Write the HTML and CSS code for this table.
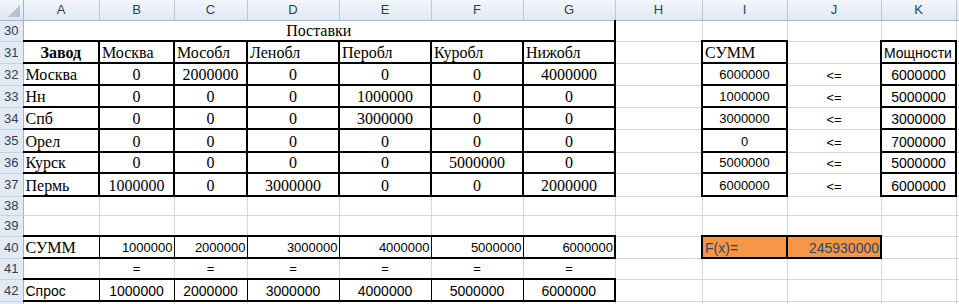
FILE: index.html
```html
<!DOCTYPE html>
<html lang="ru">
<head>
<meta charset="utf-8">
<title>Поставки</title>
<link rel="stylesheet" href="styles.css">
</head>
<body>
<table class="sheet">
  <colgroup>
    <col class="w-rh"><col class="w-a"><col class="w-b"><col class="w-c"><col class="w-d"><col class="w-e"><col class="w-f"><col class="w-g"><col class="w-h"><col class="w-i"><col class="w-j"><col class="w-k"><col class="w-l">
  </colgroup>
  <tr class="r-head">
    <th class="corner"><span class="tri"></span></th>
    <th class="ch">A</th><th class="ch">B</th><th class="ch">C</th><th class="ch">D</th><th class="ch">E</th><th class="ch">F</th><th class="ch">G</th><th class="ch">H</th><th class="ch">I</th><th class="ch">J</th><th class="ch">K</th><th class="ch"></th>
  </tr>
  <tr class="r21">
    <th class="rh">30</th>
    <td colspan="7" class="serif center title">Поставки</td>
    <td></td><td></td><td></td><td></td><td></td>
  </tr>
  <tr class="r22">
    <th class="rh">31</th>
    <td class="serif center bold tk na">Завод</td>
    <td class="serif tk">Москва</td><td class="serif tk">Мособл</td><td class="serif tk">Ленобл</td><td class="serif tk">Перобл</td><td class="serif tk">Куробл</td><td class="serif tk">Нижобл</td>
    <td></td><td class="serif tk">СУММ</td><td></td><td class="sans14 tk">Мощности</td><td></td>
  </tr>
  <tr class="r22">
    <th class="rh">32</th>
    <td class="serif tk na">Москва</td>
    <td class="serif center tk">0</td><td class="serif center tk">2000000</td><td class="serif center tk">0</td><td class="serif center tk">0</td><td class="serif center tk">0</td><td class="serif center tk">4000000</td>
    <td></td><td class="sans13 center tk">6000000</td><td class="sans13 center">&lt;=</td><td class="sans14 center tk">6000000</td><td></td>
  </tr>
  <tr class="r22">
    <th class="rh">33</th>
    <td class="serif tk na">Нн</td>
    <td class="serif center tk">0</td><td class="serif center tk">0</td><td class="serif center tk">0</td><td class="serif center tk">1000000</td><td class="serif center tk">0</td><td class="serif center tk">0</td>
    <td></td><td class="sans13 center tk">1000000</td><td class="sans13 center">&lt;=</td><td class="sans14 center tk">5000000</td><td></td>
  </tr>
  <tr class="r22">
    <th class="rh">34</th>
    <td class="serif tk na">Спб</td>
    <td class="serif center tk">0</td><td class="serif center tk">0</td><td class="serif center tk">0</td><td class="serif center tk">3000000</td><td class="serif center tk">0</td><td class="serif center tk">0</td>
    <td></td><td class="sans13 center tk">3000000</td><td class="sans13 center">&lt;=</td><td class="sans14 center tk">3000000</td><td></td>
  </tr>
  <tr class="r23">
    <th class="rh">35</th>
    <td class="serif tk na">Орел</td>
    <td class="serif center tk">0</td><td class="serif center tk">0</td><td class="serif center tk">0</td><td class="serif center tk">0</td><td class="serif center tk">0</td><td class="serif center tk">0</td>
    <td></td><td class="sans13 center tk">0</td><td class="sans13 center">&lt;=</td><td class="sans14 center tk">7000000</td><td></td>
  </tr>
  <tr class="r21">
    <th class="rh">36</th>
    <td class="serif tk na">Курск</td>
    <td class="serif center tk">0</td><td class="serif center tk">0</td><td class="serif center tk">0</td><td class="serif center tk">0</td><td class="serif center tk">5000000</td><td class="serif center tk">0</td>
    <td></td><td class="sans13 center tk">5000000</td><td class="sans13 center">&lt;=</td><td class="sans14 center tk">5000000</td><td></td>
  </tr>
  <tr class="r23">
    <th class="rh">37</th>
    <td class="serif tk na">Пермь</td>
    <td class="serif center tk">1000000</td><td class="serif center tk">0</td><td class="serif center tk">3000000</td><td class="serif center tk">0</td><td class="serif center tk">0</td><td class="serif center tk">2000000</td>
    <td></td><td class="sans13 center tk">6000000</td><td class="sans13 center">&lt;=</td><td class="sans14 center tk">6000000</td><td></td>
  </tr>
  <tr class="r19">
    <th class="rh">38</th>
    <td></td><td></td><td></td><td></td><td></td><td></td><td></td><td></td><td></td><td></td><td></td><td></td>
  </tr>
  <tr class="r21">
    <th class="rh">39</th>
    <td></td><td></td><td></td><td></td><td></td><td></td><td></td><td></td><td></td><td></td><td></td><td></td>
  </tr>
  <tr class="r22">
    <th class="rh">40</th>
    <td class="serif band first">СУММ</td>
    <td class="sans13 right band">1000000</td><td class="sans13 right band">2000000</td><td class="sans13 right band">3000000</td><td class="sans13 right band">4000000</td><td class="sans13 right band">5000000</td><td class="sans13 right band last">6000000</td>
    <td></td><td class="sans14 fx tk">F(x)=</td><td class="sans14 fx right tk">245930000</td><td></td><td></td>
  </tr>
  <tr class="r21">
    <th class="rh">41</th>
    <td></td>
    <td class="sans13 center">=</td><td class="sans13 center">=</td><td class="sans13 center">=</td><td class="sans13 center">=</td><td class="sans13 center">=</td><td class="sans13 center">=</td>
    <td></td><td></td><td></td><td></td><td></td>
  </tr>
  <tr class="r22">
    <th class="rh">42</th>
    <td class="sans14 band first">Спрос</td>
    <td class="sans14 center band">1000000</td><td class="sans14 center band">2000000</td><td class="sans14 center band">3000000</td><td class="sans14 center band">4000000</td><td class="sans14 center band">5000000</td><td class="sans14 center band last">6000000</td>
    <td></td><td></td><td></td><td></td><td></td>
  </tr>
  <tr class="r22">
    <th class="rh"></th>
    <td></td><td></td><td></td><td></td><td></td><td></td><td></td><td></td><td></td><td></td><td></td><td></td>
  </tr>
</table>
</body>
</html>
```
FILE: styles.css
```css
html, body {
  margin: 0;
  padding: 0;
  background: #ffffff;
  overflow: hidden;
}
body {
  width: 959px;
  height: 304px;
}
.sheet {
  border-collapse: collapse;
  table-layout: fixed;
  width: 980px;
  font-family: "Liberation Sans", Arial, sans-serif;
  color: #000;
}
.w-rh { width: 23px; }
.w-a { width: 76px; }
.w-b { width: 75px; }
.w-c { width: 73px; }
.w-d { width: 92px; }
.w-e { width: 92px; }
.w-f { width: 92px; }
.w-g { width: 92px; }
.w-h { width: 87px; }
.w-i { width: 85px; }
.w-j { width: 94px; }
.w-k { width: 75px; }
.w-l { width: 24px; }

.r-head { height: 20px; }
.r19 { height: 19px; }
.r21 { height: 21px; }
.r22 { height: 22px; }
.r23 { height: 23px; }

td {
  border: 1px solid #d0d7e5;
  padding: 0 2px;
  vertical-align: bottom;
  white-space: nowrap;
  overflow: visible;
  line-height: 18px;
}
th {
  padding: 0;
  font-weight: normal;
  font-family: "Liberation Sans", Arial, sans-serif;
  font-size: 13px;
  color: #2a3f5a;
}
.ch {
  background: linear-gradient(#f3f6fb, #e1e8f2);
  border: 1px solid #b9c7d8;
  border-top: none;
  border-bottom: 1px solid #9eb6ce;
  text-align: center;
  vertical-align: middle;
}
.corner {
  background: linear-gradient(#f3f6fb, #dfe6f0);
  border-right: 1px solid #9eb6ce;
  border-bottom: 1px solid #9eb6ce;
  position: relative;
}
.tri {
  position: absolute;
  right: 3px;
  bottom: 3px;
  width: 0;
  height: 0;
  border-left: 12px solid transparent;
  border-bottom: 12px solid #b4c3d6;
}
.rh {
  background: #e4eaf4;
  border-right: 1px solid #9eb6ce;
  border-bottom: 1px solid #c5d2e2;
  text-align: center;
  vertical-align: middle;
}

.serif {
  font-family: "Liberation Serif", "Times New Roman", serif;
  font-size: 16px;
}
.sans13 {
  font-size: 13px;
}
.sans14 {
  font-size: 14px;
}
.bold { font-weight: bold; }
.center { text-align: center; }
.right { text-align: right; padding-right: 1px; }

.title {
  border-right: 2px solid #000;
  border-bottom: 2px solid #000;
}
.tk {
  border: 2px solid #000;
}
.na {
  border-left: 1px solid #d0d7e5;
}
.band {
  border-top: 2px solid #000;
  border-bottom: 2px solid #000;
  border-left: 1px solid #000;
  border-right: 1px solid #000;
}
.band.first {
  border-left: 1px solid #d0d7e5;
}
.band.last {
  border-right: 2px solid #000;
}
.fx {
  background: #f79646;
  color: #2e4567;
}
```
